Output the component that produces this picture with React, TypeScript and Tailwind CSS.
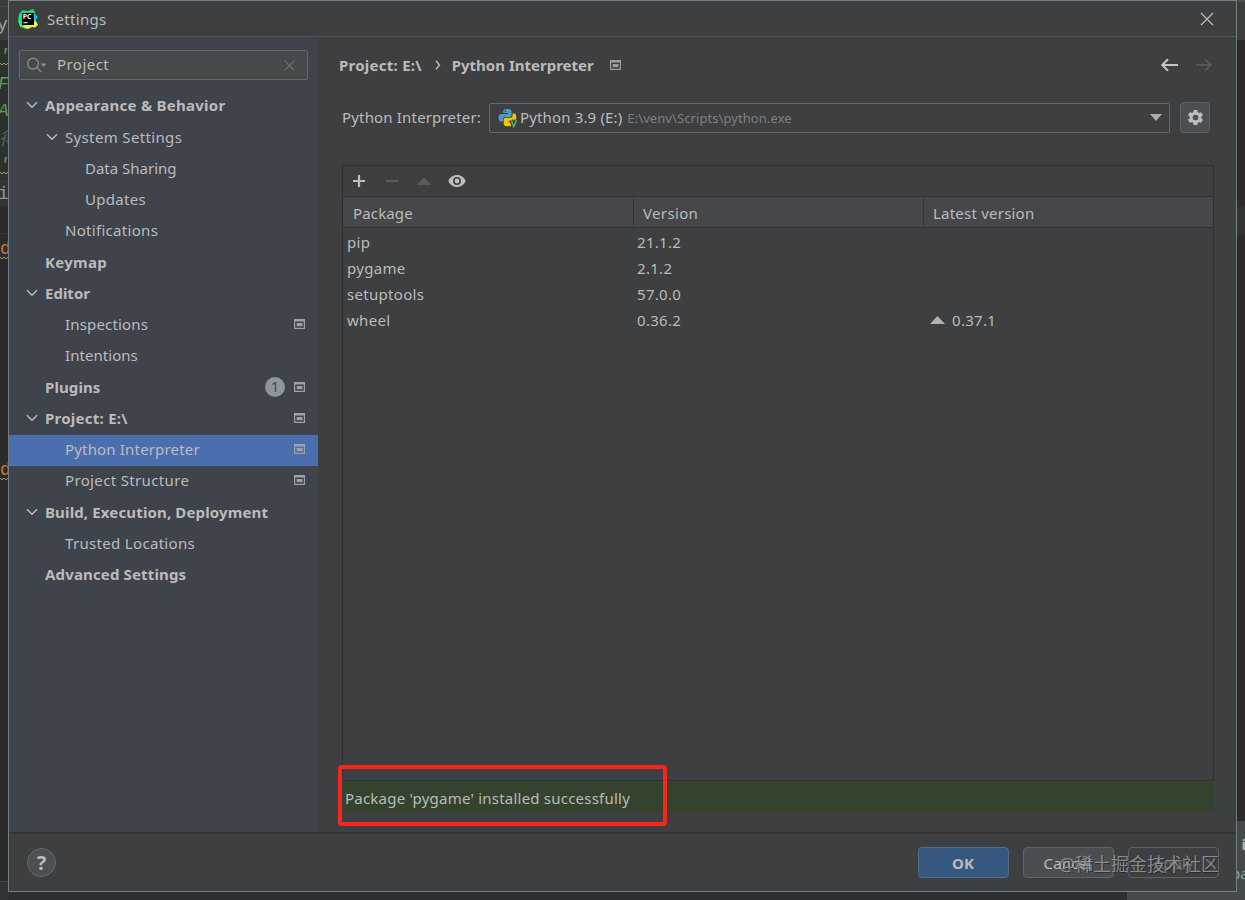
import { useState } from "react";
import type { ReactNode } from "react";
import { clsx } from "clsx";

interface TreeItem {
  label: string;
  level: number;
  expandable?: boolean;
  projectScoped?: boolean;
  badge?: number;
  tracking?: string;
}

interface PackageRow {
  name: string;
  version: string;
  latest?: string;
}

const TREE: TreeItem[] = [
  { label: "Appearance & Behavior", level: 0, expandable: true, tracking: "tracking-[0.26px]" },
  { label: "System Settings", level: 1, expandable: true, tracking: "tracking-[0.35px]" },
  { label: "Data Sharing", level: 2 },
  { label: "Updates", level: 2, tracking: "tracking-[0.28px]" },
  { label: "Notifications", level: 1, tracking: "tracking-[0.3px]" },
  { label: "Keymap", level: 0, tracking: "tracking-[0.3px]" },
  { label: "Editor", level: 0, expandable: true },
  { label: "Inspections", level: 1, projectScoped: true, tracking: "tracking-[0.17px]" },
  { label: "Intentions", level: 1, tracking: "tracking-[0.05px]" },
  { label: "Plugins", level: 0, projectScoped: true, badge: 1, tracking: "tracking-[0.1px]" },
  { label: "Project: E:\\", level: 0, expandable: true, projectScoped: true, tracking: "tracking-[0.25px]" },
  { label: "Python Interpreter", level: 1, projectScoped: true, tracking: "tracking-[0.17px]" },
  { label: "Project Structure", level: 1, projectScoped: true, tracking: "tracking-[0.35px]" },
  { label: "Build, Execution, Deployment", level: 0, expandable: true, tracking: "tracking-[0.14px]" },
  { label: "Trusted Locations", level: 1, tracking: "tracking-[0.32px]" },
  { label: "Advanced Settings", level: 0, tracking: "tracking-[0.15px]" },
];

const PACKAGES: PackageRow[] = [
  { name: "pip", version: "21.1.2" },
  { name: "pygame", version: "2.1.2" },
  { name: "setuptools", version: "57.0.0" },
  { name: "wheel", version: "0.36.2", latest: "0.37.1" },
];

function ProjectIcon({ className }: { className?: string }) {
  return (
    <svg width="11" height="10" viewBox="0 0 11 10" className={clsx("shrink-0", className)} fill="currentColor">
      <path fillRule="evenodd" d="M0 0h11v10H0zM1.2 2.6v6.2h8.6V2.6z" />
      <rect x="2.7" y="4" width="5.8" height="3.2" />
    </svg>
  );
}

function PyCharmIcon() {
  return (
    <svg width="20" height="20" viewBox="0 0 20 20" className="shrink-0">
      <path d="M1 5 4.5 1.2 10 2l5-2 2 3-1 7-8 9-5.500-1L0 12z" fill="#21d789" />
      <path d="m16 9 2 3 2 4-3 2.500-3-.500-4 2-6-1.500 2-4z" fill="#e8f050" />
      <path d="m16 4 3.500 3.500-2 5-3-1z" fill="#07c3f2" />
      <path d="m0 11 4 1 3 7.500-5-2z" fill="#3bea62" />
      <rect x="4" y="4" width="12" height="12" fill="#000" />
      <text x="4.7" y="10.4" fontSize="6.8" fontWeight="700" fill="#fff" fontFamily="Noto Sans, sans-serif">
        PC
      </text>
      <rect x="5.3" y="13.2" width="4.4" height="1" fill="#fff" />
    </svg>
  );
}

function PythonIcon() {
  return (
    <svg width="20" height="20" viewBox="0 0 20 20" className="shrink-0">
      <path
        d="M9 1C6 1 5.2 2 5.2 3.4V5H10v1H3.4C1.4 6 .5 7.5.5 9.8s1 3.800 2.600 3.800H5v-2c0-1.600 1.200-2.600 2.800-2.600h3.700c1.200 0 2.100-.900 2.100-2.100V3.400C13.600 1.800 12 1 9 1z"
        fill="#4a9cc4"
      />
      <path
        d="M14.600 5.600h1.700c1.400 0 2 1.500 2 3.800s-.800 3.900-2.400 3.900h-5.400v.800h4v1.600c0 1.700-1.400 2.600-4.400 2.600s-4.400-1-4.400-2.600V12c0-1.300.900-2.200 2.300-2.200h4c1.500 0 2.600-1 2.600-2.400z"
        fill="#f2c50d"
      />
      <circle cx="7.3" cy="3.3" r="0.8" fill="#3c3f41" />
      <path d="m13.200 12 2.600 6.800L18.500 12" fill="none" stroke="#3d3f41" strokeWidth="4" />
      <path d="m13.200 12 2.600 6.800L18.500 12" fill="none" stroke="#59a869" strokeWidth="1.6" />
    </svg>
  );
}

function Chevron() {
  return (
    <svg width="12" height="8" viewBox="0 0 12 8" fill="none" stroke="currentColor" strokeWidth="1.5">
      <path d="m1 1.200 5 5 5-5" />
    </svg>
  );
}

function Squiggle() {
  return (
    <svg width="8" height="4" viewBox="0 0 8 4" fill="none" stroke="#a09a68" className="block">
      <path d="m0 1 2 2 2-2 2 2 2-2" />
    </svg>
  );
}

function DialogButton({ children, className }: { children?: ReactNode; className: string }) {
  return (
    <button type="button" className={clsx("flex h-[31px] items-center justify-center rounded-[4px] border", className)}>
      {children}
    </button>
  );
}

// Part of the editor that stays visible to the left of the dialog
function EditorGutter() {
  return (
    <div className="flex h-full w-2 shrink-0 flex-col overflow-hidden bg-[#2b2b2b] font-['Liberation_Mono','Noto_Sans_CJK_SC',monospace] text-[18px] leading-[28px]">
      <div className="h-[40px] shrink-0 bg-[#393c3d] pt-[6px]">
        <div className="-ml-[3px] border-t border-[#45484a] leading-[36px] text-[#a0a0a0]">y</div>
      </div>
      <div className="h-[140px] shrink-0 bg-[#2c312d] text-[#629755] italic">
        <div className="h-[22px] -ml-px leading-[32px]">'</div>
        <Squiggle />
        <div className="-ml-[2px] h-[28px] leading-[36px]">F</div>
        <div className="-ml-[2px] h-[28px] leading-[34px]">A</div>
        <div className="-ml-px h-[27px] leading-[36px] text-[#52694d]">得</div>
        <div className="h-[22px] -ml-px leading-[32px]">'</div>
        <Squiggle />
      </div>
      <div className="h-[26px] shrink-0 bg-[#323435] -indent-[2px] text-[#8f9499]">i</div>
      <div className="h-[28px] shrink-0 border-b border-[#353535]" />
      <div className="h-[34px] shrink-0 text-[#cc7832]">
        <div className="h-[22px] leading-[31px]">d</div>
        <Squiggle />
      </div>
      <div className="h-[187px] shrink-0" />
      <div className="h-[34px] shrink-0 text-[#cc7832]">
        <div className="h-[22px] leading-[31px]">d</div>
        <Squiggle />
      </div>
      <div className="grow" />
      <div className="h-[19px] shrink-0 border-t border-[#45484a] bg-[#313436]" />
    </div>
  );
}

function TreeRow({ item, selected, onSelect }: { item: TreeItem; selected: boolean; onSelect: () => void }) {
  return (
    <div
      onClick={onSelect}
      className={clsx(
        "flex h-[31px] items-center pr-[13px] pb-[3px] [&:nth-child(4n+1)]:mb-px",
        selected && "bg-[#4b6eaf]",
        item.level === 0 && "pl-[16px] font-bold",
        item.level === 1 && "pl-[36px]",
        item.level === 2 && "pl-[56px]"
      )}
    >
      <span className="flex w-5 shrink-0 pl-px">{item.expandable && <Chevron />}</span>
      <span className={clsx("grow whitespace-nowrap", item.tracking)}>{item.label}</span>
      {item.badge && (
        <span className="mr-[9px] flex size-[20px] items-center justify-center rounded-full bg-[#8e959d] text-[14px] font-normal text-[#3d434c]">
          {item.badge}
        </span>
      )}
      {item.projectScoped && <ProjectIcon className="text-[#9ba2aa]" />}
    </div>
  );
}

function Sidebar() {
  const [selected, setSelected] = useState("Python Interpreter");

  return (
    <div className="w-[309px] shrink-0 bg-[#3e434c]">
      <div className="mt-[13px] ml-[10px] flex h-[30px] w-[289px] items-center rounded-[2px] border border-[#646769] bg-[#45494a] pr-[12px] pl-[6px]">
        <svg width="21" height="16" viewBox="0 0 21 16" fill="none" stroke="#858a8e" strokeWidth="1.4">
          <circle cx="7" cy="6.6" r="5.4" />
          <path d="m11 10.600 4.300 4.400" />
          <path d="M14.500 6.500h6l-3 3.200z" fill="#8b9196" stroke="none" />
        </svg>
        <span className="grow pb-[3px] pl-[10px] tracking-[0.45px]">Project</span>
        <svg width="11" height="11" viewBox="0 0 11 11" stroke="#6e7275" strokeWidth="1.1">
          <path d="m.7.7 9.600 9.600m0-9.600L.7 10.300" />
        </svg>
      </div>
      <div className="pt-[11px]">
        {TREE.map((item) => (
          <TreeRow
            key={item.label}
            item={item}
            selected={item.label === selected}
            onSelect={() => setSelected(item.label)}
          />
        ))}
      </div>
    </div>
  );
}

function PackagePanel() {
  return (
    <div className="mt-[32px] flex grow flex-col border border-[#2f3133]">
      <div className="flex h-[31px] shrink-0 items-center border-b border-[#2f3133] pl-[9px]">
        <svg width="115" height="16" viewBox="0 0 115 16">
          <path d="M7 2v12M1 8h12" stroke="#bcbec0" strokeWidth="2.2" />
          <path d="M34 8h13" stroke="#5d6062" strokeWidth="1.8" />
          <path d="m64.500 12 7.500-7.500 7.500 7.500z" fill="#5a5d5f" />
          <path
            fillRule="evenodd"
            fill="#bcbec0"
            d="M105 2c4 0 7.200 2.400 8.700 6-1.500 3.600-4.700 6-8.700 6s-7.200-2.400-8.700-6C97.800 4.400 101 2 105 2zm0 2a4 4 0 1 0 0 8 4 4 0 0 0 0-8z"
          />
          <circle cx="105" cy="8" r="2.4" fill="#bcbec0" />
        </svg>
      </div>
      <div className="grid h-[31px] shrink-0 grid-cols-[291px_290px_1fr] items-center border-b border-[#2f3133] bg-[#45474a] leading-[26px]">
        <div className="border-r border-[#343638] pt-[2px] pl-[10px] tracking-[0.15px]">Package</div>
        <div className="border-r border-[#343638] pt-[2px] pl-[9px] tracking-[0.35px]">Version</div>
        <div className="pt-[2px] pl-[9px] tracking-[0.22px]">Latest version</div>
      </div>
      <div className="pt-px">
        {PACKAGES.map((row) => (
          <div key={row.name} className="grid h-[26px] grid-cols-[290px_290px_1fr] items-center tracking-[0.3px]">
            <span className="pl-[4px]">{row.name}</span>
            <span className="pl-[4px]">{row.version}</span>
            {row.latest && (
              <span className="flex items-center gap-[7px] pl-[7px]">
                <svg width="15" height="8" viewBox="0 0 15 8" fill="#b0b2b4">
                  <path d="M0 8 7.500 0 15 8z" />
                </svg>
                {row.latest}
              </span>
            )}
          </div>
        ))}
      </div>
    </div>
  );
}

function InterpreterPage() {
  return (
    <div className="flex grow flex-col pr-[22px] pl-[24px]">
      <div className="mt-[13px] flex h-[29px] shrink-0 items-center font-bold">
        <span className="-ml-[3px] tracking-[0.25px]">Project: E:\</span>
        <svg
          width="6"
          height="10"
          viewBox="0 0 6 10"
          fill="none"
          stroke="#bbbbbb"
          strokeWidth="1.4"
          className="mr-[11px] ml-[13px]"
        >
          <path d="m1 .7 3.500 4.300L1 9.300" />
        </svg>
        <span>Python Interpreter</span>
        <ProjectIcon className="ml-[16px] text-[#9a9c9e]" />
        <svg width="52" height="14" viewBox="0 0 52 14" fill="none" strokeWidth="2" className="mr-[2px] ml-auto">
          <path d="M18 7H2.500M8 1.300 2.200 7 8 12.700" stroke="#c4c6c8" />
          <path d="M36 7h14.500M45 1.300 50.800 7 45 12.700" stroke="#5d6062" strokeWidth="1.6" />
        </svg>
      </div>
      <div className="mt-[23px] flex h-[31px] shrink-0 items-center">
        <span className="w-[147px] shrink-0 pb-px tracking-[0.17px] whitespace-nowrap">Python Interpreter:</span>
        <div className="flex h-[30px] grow items-center rounded-[2px] border border-[#646769] pr-[7px] pl-[8px]">
          <PythonIcon />
          <span className="ml-[2px] pb-px tracking-[0.15px]">Python 3.9 (E:)</span>
          <span className="ml-[5px] text-[13px] tracking-[0.08px] text-[#808080]">E:\venv\Scripts\python.exe</span>
          <svg width="12" height="7" viewBox="0 0 12 7" fill="#a9abad" className="ml-auto">
            <path d="M0 0h12L6 7z" />
          </svg>
        </div>
        <button
          type="button"
          className="mr-[4px] ml-[10px] flex h-[31px] w-[30px] shrink-0 items-center justify-center rounded-[4px] border border-[#5e6264] bg-[#4c5052]"
        >
          <svg width="19" height="19" viewBox="0 0 24 24" fill="#bcbec0" className="shrink-0">
            <path d="M19.140 12.940c.040-.300.060-.610.060-.940 0-.320-.020-.640-.070-.940l2.030-1.580a.49.49 0 0 0 .120-.610l-1.920-3.320a.488.488 0 0 0-.590-.220l-2.390.960c-.500-.380-1.030-.700-1.620-.940l-.360-2.540a.484.484 0 0 0-.480-.410h-3.840c-.240 0-.430.170-.470.410l-.360 2.540c-.590.240-1.130.570-1.620.940l-2.390-.960c-.220-.080-.470 0-.590.220L2.740 8.870c-.120.210-.080.470.120.610l2.030 1.580c-.050.300-.090.630-.090.940s.020.640.070.940l-2.030 1.580a.49.49 0 0 0-.120.610l1.920 3.320c.120.220.370.290.590.220l2.390-.960c.500.380 1.030.700 1.620.940l.360 2.540c.050.240.240.410.480.410h3.840c.240 0 .440-.170.470-.410l.360-2.540c.590-.240 1.130-.560 1.620-.940l2.390.960c.220.080.470 0 .590-.220l1.920-3.320c.120-.220.070-.470-.120-.610zM12 15.600A3.600 3.600 0 1 1 12 8.400a3.600 3.600 0 0 1 0 7.200z" />
          </svg>
        </button>
      </div>
      <PackagePanel />
      <div className="relative mt-px mb-[20px] flex h-[30px] shrink-0 items-center bg-[#34432e] pt-px pl-[3px]">
        <span className="tracking-[0.22px]">Package 'pygame' installed successfully</span>
        <div className="absolute -top-[17px] -left-[4px] h-[61px] w-[329px] rounded-[4px] border-4 border-[#f9271b]" />
      </div>
    </div>
  );
}

export default function App() {
  return (
    <div className="flex h-[900px] w-[1245px] overflow-hidden bg-[#2b2d2e] font-['Noto_Sans','Noto_Sans_CJK_SC',sans-serif] text-[15px] leading-[20px] text-[#bbbbbb]">
      <EditorGutter />
      <div className="flex w-[1229px] shrink-0 flex-col">
        <div className="flex h-[892px] shrink-0 flex-col border border-[#718080] bg-[#3d3f41]">
          <div className="flex h-[36px] shrink-0 items-center border-b border-[#515556] pr-[22px] pl-[9px]">
            <PyCharmIcon />
            <span className="ml-[9px] pt-px tracking-[0.3px]">Settings</span>
            <svg width="14" height="14" viewBox="0 0 14 14" stroke="#bbbbbb" strokeWidth="1.2" className="ml-auto">
              <path d="m1 1 12 12M13 1 1 13" />
            </svg>
          </div>
          <div className="flex grow">
            <Sidebar />
            <InterpreterPage />
          </div>
          <div className="relative flex h-[59px] shrink-0 items-center border-t-2 border-[#313335] pr-[17px] pl-[18px]">
            <div className="flex size-[29px] items-center justify-center rounded-full border border-[#656969] bg-[#4c5052] text-[20px] font-bold">
              ?
            </div>
            <div className="ml-auto flex gap-[14px]">
              <DialogButton className="w-[91px] border-[#4c708c] bg-[#365880] pr-px font-bold">OK</DialogButton>
              <DialogButton className="w-[91px] border-[#5e6264] bg-[#4a4e50] pr-[2px] tracking-[0.2px]">
                Cancel
              </DialogButton>
              <DialogButton className="w-[91px] border-[#5e6264] text-[#777777]">Apply</DialogButton>
            </div>
            <div className="absolute top-[18px] right-[17px] text-[18px] leading-[24px] whitespace-nowrap text-[#a3a5a6]/75 [text-shadow:1px_1px_0px_rgba(0,0,0,0.35)]">
              @稀土掘金技术社区
            </div>
          </div>
        </div>
        <div className="flex h-2 justify-end bg-[#2d3032]">
          <div className="w-[110px] bg-[#45494b]" />
        </div>
      </div>
      <div className="flex w-2 shrink-0 flex-col overflow-hidden bg-[#2b2b2b]">
        <div className="h-[40px] shrink-0 border-t-2 border-[#4a4d4f] bg-[#3a3d3e]" />
        <div className="h-[167px] shrink-0" />
        <div className="h-[28px] shrink-0 bg-[#303233]" />
        <div className="h-[586px] shrink-0" />
        <div className="grow bg-[#45494b] pt-[13px] whitespace-nowrap text-[#b5b9bb]">
          <div className="-ml-[7px] h-[29px] font-bold">s i</div>
          <div className="-ml-[6px] text-[#7ea7a0]">pa</div>
        </div>
      </div>
    </div>
  );
}
